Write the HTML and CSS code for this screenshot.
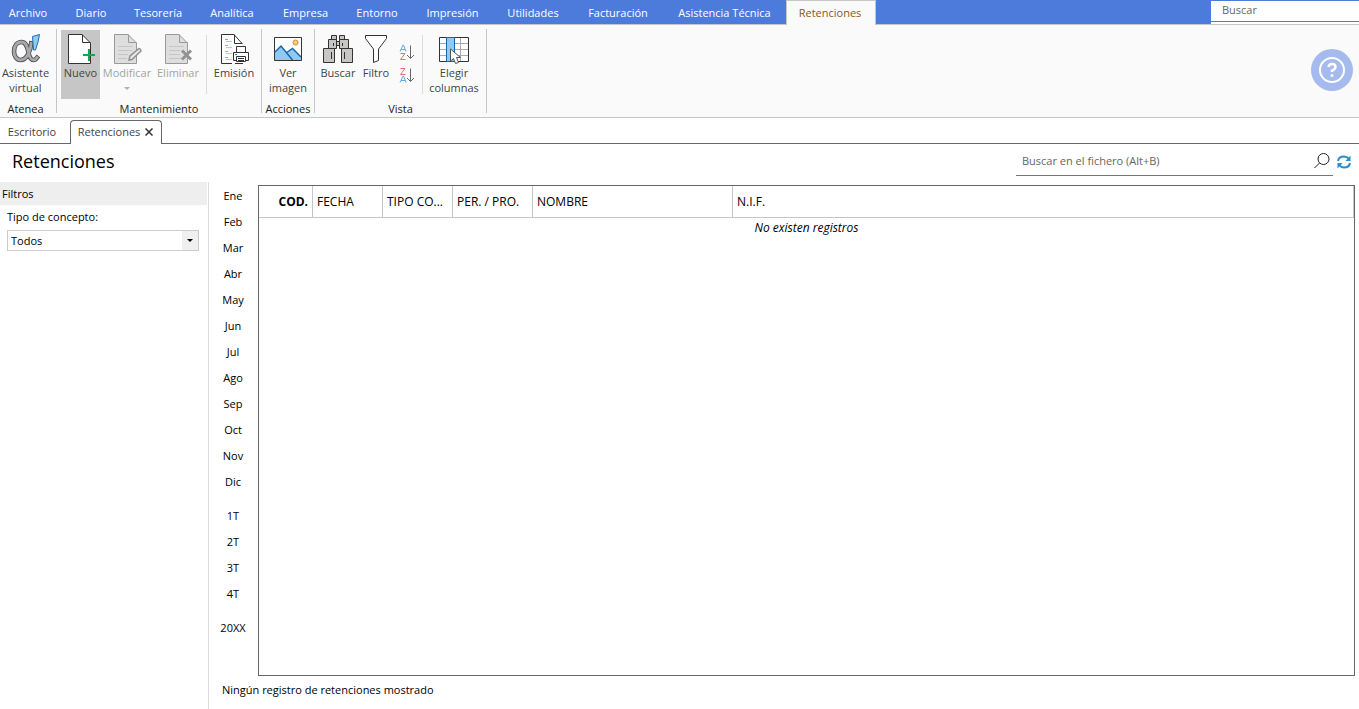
FILE: index.html
```html
<!DOCTYPE html>
<html lang="es">
<head>
<meta charset="utf-8">
<title>Retenciones</title>
<link rel="stylesheet" href="styles.css">
</head>
<body>
<header class="menubar">
  <nav class="menu">
    <button class="menu-item first">Archivo</button>
    <button class="menu-item">Diario</button>
    <button class="menu-item">Tesorería</button>
    <button class="menu-item">Analítica</button>
    <button class="menu-item">Empresa</button>
    <button class="menu-item">Entorno</button>
    <button class="menu-item">Impresión</button>
    <button class="menu-item">Utilidades</button>
    <button class="menu-item">Facturación</button>
    <button class="menu-item">Asistencia Técnica</button>
    <button class="menu-item active">Retenciones</button>
  </nav>
  <div class="top-search"><input type="text" placeholder="Buscar" aria-label="Buscar"></div>
</header>

<section class="ribbon">
  <div class="group g-atenea">
    <div class="tools">
      <button class="tool">
        <svg width="32" height="32" viewBox="0 0 32 32" fill="none"><path d="M21.500 9C21 18 17 28 10.500 28C6.500 28 4 24 4 19.500C4 14 7 10 11.500 10C17 10 17.500 17 19 22.500C20 27 22.500 29 25.500 27.500L28.500 24" stroke="#4f4f51" stroke-width="4.600"/><path d="M21.300 10C21 18 17 28 10.500 28C6.500 28 4 24 4 19.500C4 14 7 10 11.500 10C17 10 17.500 17 19 22.500C20 27 22.500 29 25.500 27.500L28 24.500" stroke="#a8a8aa" stroke-width="2.800"/><path d="M22.500 4.500L29.500 2.500Q28.500 10 25.500 18H23.500Z" fill="#92c9f2" stroke="#1b6fb5"/></svg>
        <span>Asistente<br>virtual</span>
      </button>
    </div>
    <div class="group-label">Atenea</div>
  </div>

  <div class="group g-mant">
    <div class="tools">
      <button class="tool selected w39">
        <svg width="32" height="32" viewBox="0 0 32 32" fill="none"><path d="M3.500 2.500H17L25.500 11V31.500H3.500Z" fill="#fff" stroke="#333"/><path d="M17.500 2.500V10.500H25.500" stroke="#333"/><path d="M18 23H30M24 17V29" stroke="#12a853" stroke-width="2"/></svg>
        <span>Nuevo</span>
      </button>
      <button class="tool w54" disabled>
        <svg width="32" height="32" viewBox="0 0 32 32" fill="none"><path d="M3.500 2.500H17L25.500 11V31.500H3.500Z" fill="#dedede" stroke="#999"/><path d="M17.500 2.500V10.500H25.500" stroke="#999"/><path d="M7 14.500H22M7 18.500H21M7 22.500H17M7 26.500H16" stroke="#c5c5c5"/><path d="M18 28L19 24L28 16.500Q30 17 30 19L21 27.500Z" fill="#e6e6e6" stroke="#8f8f8f" stroke-width="1.500"/></svg>
        <span>Modificar</span><i class="caret"></i>
      </button>
      <button class="tool w48" disabled>
        <svg width="32" height="32" viewBox="0 0 32 32" fill="none"><path d="M3.500 2.500H17L25.500 11V31.500H3.500Z" fill="#dedede" stroke="#999"/><path d="M17.500 2.500V10.500H25.500" stroke="#999"/><path d="M7 14.500H22M7 18.500H18M7 22.500H18M7 26.500H19" stroke="#c5c5c5"/><path d="M20 18.500L29 27.500M29 18.500L20 27.500" stroke="#929292" stroke-width="3"/></svg>
        <span>Eliminar</span>
      </button>
      <div class="sep"></div>
      <button class="tool w54">
        <svg width="32" height="32" viewBox="0 0 32 32" fill="none"><path d="M24 12L16 2.500H3.500V31.500H17V20H24Z" fill="#fff"/><path d="M24.500 12L16 2.500H3.500V31.500H14M16.500 2.500V11.500H24M17 31.500H25" stroke="#333"/><path d="M7 7.500H10M7 13.500H10M7 19.500H10M7 25.500H10" stroke="#f29b1d"/><path d="M8 9.500H14M8 15.500H14M8 21.500H14M8 27.500H14" stroke="#c5c5c5"/><path d="M18.500 20V14.500H27.500V20M18 28.500H15.500V20.500H30.500V28.500H28" fill="#fff" stroke="#333"/><path d="M18.500 24.500H27.500V29.500H18.500ZM20 26.500H26M20 28.500H26" fill="#fff" stroke="#333"/><path d="M17 22.500H19" stroke="#1b8ed2"/></svg>
        <span>Emisión</span>
      </button>
    </div>
    <div class="group-label">Mantenimiento</div>
  </div>

  <div class="group g-acc">
    <div class="tools">
      <button class="tool">
        <svg width="32" height="32" viewBox="0 0 32 32" fill="none"><path d="M2.500 5.500H29.500V28.500H2.500Z" fill="#fff"/><path d="M3 20L9 14L15 20L20 17L29 25V28H3Z" fill="#92c9f2"/><path d="M3 20L9 14L20.500 28M14 21L20.500 16.500L29 25" stroke="#1767ab" stroke-width="1.500"/><circle cx="23.500" cy="10.500" r="2.500" fill="#fbd078" stroke="#e68332"/><path d="M2.500 5.500H29.500V28.500H2.500Z" stroke="#333"/></svg>
        <span>Ver<br>imagen</span>
      </button>
    </div>
    <div class="group-label">Acciones</div>
  </div>

  <div class="group g-vista">
    <div class="tools">
      <button class="tool w42">
        <svg width="32" height="32" viewBox="0 0 32 32" fill="#c8c6c4" stroke="#333"><path d="M9.500 3.500H14.500V7.500H9.500ZM17.500 3.500H22.500V7.500H17.500ZM6.500 7.500H14.500V16.500H6.500ZM17.500 7.500H26.500V16.500H17.500ZM14.500 9.500H17.500V13.500H14.500ZM1.500 16.500H12.500V30.500H1.500ZM19.500 16.500H30.500V30.500H19.500Z"/><path d="M11.500 11V14M20.500 11V14M9.500 20V27M22.500 20V27"/></svg>
        <span>Buscar</span>
      </button>
      <button class="tool w34">
        <svg width="32" height="32" viewBox="0 0 32 32"><path d="M5.500 3.500H26.500V6.500L18.500 17V28.500L13.500 30.500V17L5.500 6.500Z" fill="#fff" stroke="#333"/></svg>
        <span>Filtro</span>
      </button>
      <div class="sorts">
        <button class="sort" aria-label="Orden ascendente"><svg width="16" height="17" viewBox="0 0 16 17" fill="none"><path d="M1 7.500L4 1H4.500L7 7.500M2 5.500H6" stroke="#63aee0"/><path d="M1.500 9.500H6L1.500 15.500H6.500" stroke="#ed6b6b"/><path d="M11.500 1.500V14M8 11L11.500 14.500L15 11" stroke="#666"/></svg></button>
        <button class="sort" aria-label="Orden descendente"><svg width="16" height="17" viewBox="0 0 16 17" fill="none"><path d="M1.500 1.500H6L1.500 7.500H6.500" stroke="#ed6b6b"/><path d="M1 15.500L4 9H4.500L7 15.500M2 13.500H6" stroke="#63aee0"/><path d="M11.500 1.500V14M8 11L11.500 14.500L15 11" stroke="#666"/></svg></button>
      </div>
      <div class="sep"></div>
      <button class="tool w54">
        <svg width="32" height="32" viewBox="0 0 32 32" fill="none"><path d="M1.500 5.500H30.500V29.500H1.500Z" fill="#fff"/><path d="M2 11.500H30M2 17.500H30M2 23.500H30M22.500 6V29" stroke="#aaa"/><path d="M1.500 5.500H30.500V29.500H1.500Z" stroke="#333"/><path d="M8.500 5.500H16.500V29.500H8.500Z" fill="#92c9f2" stroke="#1767ab"/><path d="M12.500 17V29L15.500 26.500L17.500 31.500L20.500 30.500L18.500 25.500H22.500Z" fill="#fff" stroke="#555"/></svg>
        <span>Elegir<br>columnas</span>
      </button>
    </div>
    <div class="group-label">Vista</div>
  </div>

  <button class="help" aria-label="Ayuda"><svg width="42" height="42" viewBox="0 0 42 42" fill="none"><circle cx="21" cy="21" r="21" fill="#a6bbed"/><circle cx="21" cy="21" r="12" stroke="#fff" stroke-width="2"/><path d="M17.500 18Q18 15 21 15Q24.500 15 24.500 18Q24.500 20 21 21.500V23" stroke="#fff" stroke-width="2.500"/><circle cx="21" cy="26.500" r="1.500" fill="#fff"/></svg></button>
</section>

<div class="doc-tabs">
  <button class="doc-tab">Escritorio</button>
  <button class="doc-tab current">Retenciones
    <svg width="8" height="8" viewBox="0 0 8 8"><path d="M0.500 0.500L7.500 7.500M7.500 0.500L0.500 7.500" stroke="#333" stroke-width="1.500"/></svg>
  </button>
</div>

<div class="title-row">
  <h1>Retenciones</h1>
  <div class="file-search">
    <input type="text" placeholder="Buscar en el fichero (Alt+B)" aria-label="Buscar en el fichero">
    <svg width="16" height="16" viewBox="0 0 16 16" fill="none"><circle cx="9.500" cy="6" r="5.500" stroke="#222"/><path d="M5.500 10L0.500 15" stroke="#222"/></svg>
  </div>
  <button class="refresh" aria-label="Actualizar"><svg width="14" height="14" viewBox="0 0 14 14" fill="none"><path d="M1 6C1.500 3 4 1.500 7 1.500Q10 1.500 12 4M13 8C12.500 11 10 12.500 7 12.500Q4 12.500 2 10" stroke="#2b8bcb" stroke-width="2"/><path d="M13.500 0.500V6H8.500ZM0.500 13.500V8H5.500Z" fill="#2b8bcb"/></svg></button>
</div>

<main class="workspace">
  <aside class="filters">
    <h2>Filtros</h2>
    <label for="tipo">Tipo de concepto:</label>
    <div class="select-box"><select id="tipo"><option>Todos</option></select><span class="arrow"></span></div>
  </aside>
  <section class="content">
    <div class="browse">
      <nav class="periods">
        <button>Ene</button><button>Feb</button><button>Mar</button><button>Abr</button><button>May</button><button>Jun</button><button>Jul</button><button>Ago</button><button>Sep</button><button>Oct</button><button>Nov</button><button>Dic</button>
        <button class="start">1T</button><button>2T</button><button>3T</button><button>4T</button>
        <button class="start">20XX</button>
      </nav>
      <div class="grid-box">
        <table>
          <colgroup><col class="c-cod"><col class="c-70"><col class="c-70"><col class="c-80"><col class="c-200"><col></colgroup>
          <thead><tr><th class="cod">COD.</th><th>FECHA</th><th>TIPO CO...</th><th>PER. / PRO.</th><th>NOMBRE</th><th>N.I.F.</th></tr></thead>
          <tbody><tr><td colspan="6">No existen registros</td></tr></tbody>
        </table>
      </div>
    </div>
    <footer>Ningún registro de retenciones mostrado</footer>
  </section>
</main>
</body>
</html>
```

FILE: styles.css
```css
* { box-sizing: border-box; }
body {
  margin: 0;
  min-height: 100vh;
  display: flex;
  flex-direction: column;
  background: #fff;
  color: #000;
  font: 11px/15px "Open Sans", "Noto Sans", sans-serif;
}
button, input, select {
  font: inherit;
  color: inherit;
  border: 0;
  padding: 0;
  margin: 0;
  background: transparent;
  outline: 0;
}
svg { display: block; flex: none; }

.menubar {
  display: flex;
  justify-content: space-between;
  height: 25px;
  background: #4d7bdc;
  border-bottom: 1px solid #c6c6c6;
}
.menu {
  display: grid;
  grid-template-columns: 61px 60px 74px 74px 73px 70px 81px 80px 90px 123px 90px;
  height: 25px;
}
.menu-item { color: #fff; padding-bottom: 1px; white-space: nowrap; }
.menu-item.first { padding-right: 5px; }
.menu-item.active {
  color: #8a5b0c;
  background: #fafafa;
  border: 1px solid #c6c6c6;
  border-bottom: 0;
  padding: 0 2px 2px 0;
}
.top-search {
  width: 148px;
  background: #fff;
  margin-top: 1px;
}
.top-search input {
  display: block;
  width: 100%;
  height: 21px;
  padding: 0 11px 3px;
  border-bottom: 1px solid #777;
}
input::placeholder { color: #666; opacity: 1; }

.ribbon {
  display: flex;
  height: 93px;
  background: #fafafa;
  border-bottom: 1px solid #c6c6c6;
  padding-top: 4px;
  color: #444;
}
.group {
  display: flex;
  flex-direction: column;
  height: 84px;
  border-right: 1px solid #c6c6c6;
  padding-top: 1px;
}
.g-atenea { width: 57px; padding-right: 5px; }
.g-mant { width: 205px; }
.g-acc { width: 53px; }
.g-vista { width: 172px; }
.tools { display: flex; height: 69px; }
.g-mant .tools { padding-left: 4px; }
.g-vista .tools { padding-left: 2px; }
.g-atenea .tool, .g-acc .tool { width: 100%; }
.tool {
  display: flex;
  flex-direction: column;
  align-items: center;
  flex: none;
  padding-top: 2px;
  height: 69px;
}
.tool svg { margin-bottom: 1px; }
.tool span { white-space: nowrap; }
.tool:disabled { color: #a3a3a3; }
.tool.selected { background: #c6c6c6; }
.w39 { width: 39px; }
.w42 { width: 42px; }
.w34 { width: 34px; }
.w48 { width: 48px; }
.w54 { width: 54px; }
.caret {
  border: 3px solid transparent;
  border-top-color: #b0b0b0;
  border-bottom: 0;
  margin-top: 7px;
}
.sep { width: 1px; height: 59px; background: #dcdcdc; margin-top: 5px; margin-left: 4px; }
.sorts { display: flex; flex-direction: column; gap: 6px; padding: 14px 0 0 6px; width: 24px; }
.sort { height: 17px; width: 16px; }
.g-vista .sep { margin-left: 5px; margin-right: 4px; }
.group-label { text-align: center; color: #222; margin-top: 2px; }
.help { margin: 20px 6px 0 auto; height: 42px; border-radius: 50%; }

.doc-tabs {
  display: flex;
  height: 26px;
  padding-top: 2px;
  border-bottom: 1px solid #666;
}
.doc-tab { color: #444; width: 70px; padding: 0 6px 1px 0; height: 23px; }
.doc-tab.current {
  display: flex;
  align-items: center;
  justify-content: center;
  gap: 5px;
  width: 92px;
  height: 24px;
  padding: 0 1px 2px 0;
  background: #fff;
  border: 1px solid #666;
  border-bottom: 0;
  border-radius: 4px 4px 0 0;
}

.title-row { display: flex; height: 38px; padding: 0 8px 0 12px; }
h1 { margin: 3px auto 0 0; font-size: 18px; line-height: 28px; font-weight: 400; }
.file-search {
  display: flex;
  align-items: center;
  width: 317px;
  height: 32px;
  padding: 0 3px 0 6px;
  border-bottom: 1px solid #777;
}
.file-search input { flex: 1; min-width: 0; padding-top: 2px; }
.file-search svg { margin-top: 3px; }
.refresh { width: 14px; height: 14px; margin: 11px 0 0 4px; }

.workspace { display: flex; flex: 1; }
.filters { width: 209px; border-right: 1px solid #dcdcdc; }
h2 {
  margin: 0 1px 4px 0;
  padding: 4px 2px;
  background: #eee;
  font-size: 11px;
  line-height: 15px;
  font-weight: 400;
}
.filters label { display: block; margin: 4px 7px 6px; }
.select-box {
  display: flex;
  position: relative;
  margin: 0 9px 0 7px;
  height: 21px;
  border: 1px solid #ccc;
}
.select-box select { flex: 1; appearance: none; padding: 0 3px; }
.arrow {
  position: absolute;
  top: 0;
  right: 0;
  bottom: 0;
  width: 16px;
  background: #f0f0f0;
  display: grid;
  place-items: center;
  pointer-events: none;
}
.arrow::after { content: ""; border: 3px solid transparent; border-top-color: #000; border-bottom: 0; }

.content { flex: 1; min-width: 0; display: flex; flex-direction: column; padding: 3px 4px 0 0; }
.browse { display: flex; flex: 1; }
.periods { display: flex; flex-direction: column; width: 49px; }
.periods button { height: 26px; padding: 0 1px 6px 0; }
.periods .start { margin-top: 8px; }
.grid-box { flex: 1; min-width: 0; border: 1px solid #666; }
table {
  width: 100%;
  table-layout: fixed;
  border-collapse: separate;
  border-spacing: 0;
  font-size: 12px;
}
.c-cod { width: 54px; }
.c-70 { width: 70px; }
.c-80 { width: 80px; }
.c-200 { width: 200px; }
th {
  height: 32px;
  padding: 0 4px;
  border-right: 1px solid #c6c6c6;
  border-bottom: 1px solid #c6c6c6;
  text-align: left;
  font-weight: 400;
  white-space: nowrap;
}
th.cod { text-align: right; font-weight: 700; }
td { height: 18px; padding: 0; text-align: center; font-style: italic; }
footer { height: 33px; padding: 6px 13px 0; }
```
